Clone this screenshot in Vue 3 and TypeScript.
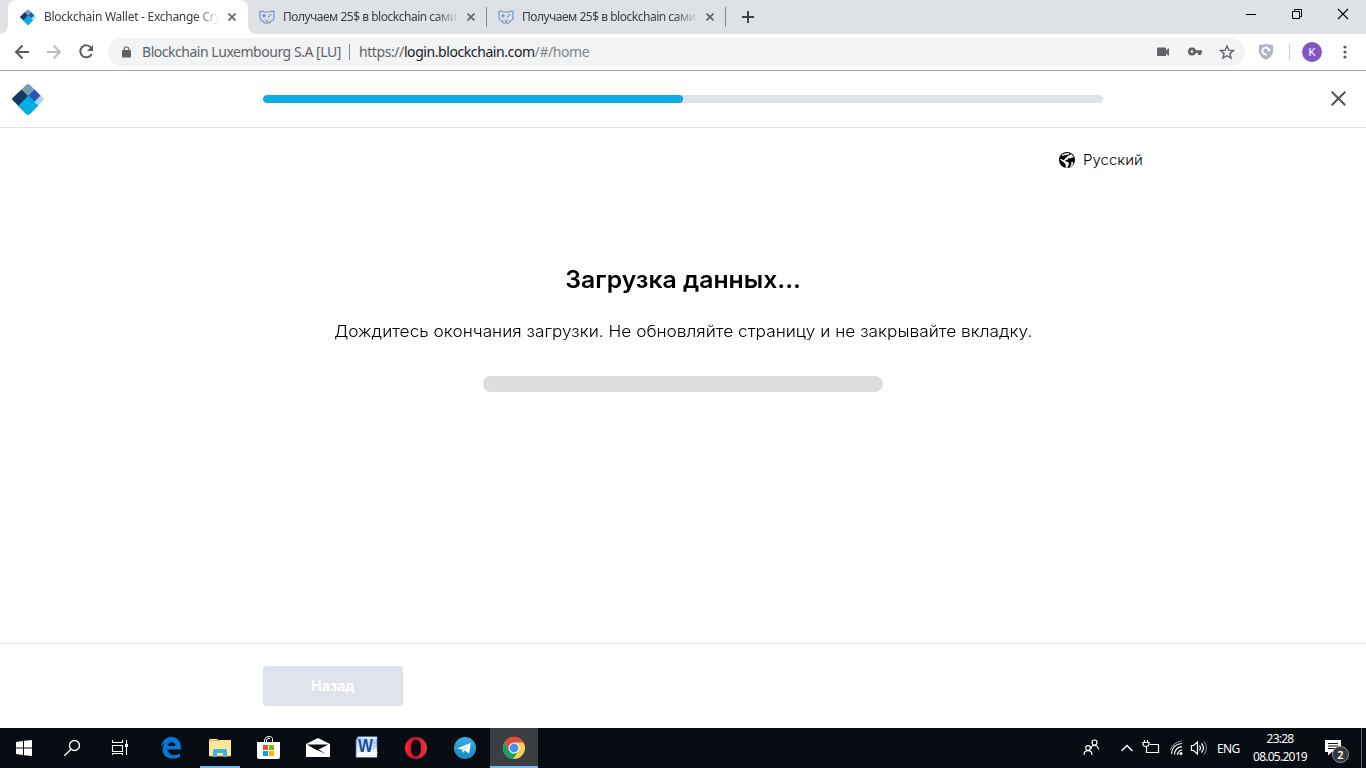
<script setup lang="ts">
interface Tab {
  id: number
  title: string
  active: boolean
}

const tabs: Tab[] = [
  { id: 1, title: 'Blockchain Wallet - Exchange Cry', active: true },
  { id: 2, title: 'Получаем 25$ в blockchain сами', active: false },
  { id: 3, title: 'Получаем 25$ в blockchain сами', active: false },
]

const progress = 50
</script>

<template>
  <div class="screen">
    <div class="tabstrip">
      <div v-for="tab in tabs" :key="tab.id" class="tab" :class="{ active: tab.active }">
        <svg v-if="tab.active" class="favicon" width="16" height="16" viewBox="0 0 32 32">
          <path d="M9 7 14 2Q16 0 18 2L23 7 16 14Z" fill="#799eb2" />
          <path d="M16 12.500 26.500 22.500 18 31Q16 33 14 31L5.500 22.500Z" fill="#00aee6" />
          <path d="M28 12 31.200 15Q32.300 16 31.200 17.500L26.300 22.500 22 18.500Z" fill="#afd3e6" />
          <path d="M9.500 6.500 16 13 6.300 22.700 1 17.500Q-1 16 1 14.500Z" fill="#123962" />
          <path d="M22.500 6.500 28.500 12.500 22.500 18.800 16.300 12.800Z" fill="#2754ba" />
        </svg>
        <svg v-else class="favicon" width="16" height="16" viewBox="0 0 16 16" fill="none" stroke="#7094c4">
          <path d="M1 2.300 3.500 2 5 3H11L12.500 2 15 2.300V9Q14.700 11.500 12 12.300L10.500 14H5.500L4 12.300Q1.300 11.500 1 9Z" stroke-width="1.200" />
          <path d="M5 5V8.500M3.300 6.700H6.700M8 11V14" stroke-width="1.500" />
          <circle cx="11.500" cy="5.800" r=".9" fill="#7094c4" stroke="none" />
          <circle cx="9.900" cy="7.500" r=".9" fill="#7094c4" stroke="none" />
          <path d="M5.500 11H6.500M9.500 11H10.500" />
        </svg>
        <span class="tab-title">{{ tab.title }}</span>
        <svg class="tab-close" width="8" height="8" viewBox="0 0 8 8"><path d="M.5.500 7.500 7.500M7.500.500.500 7.500" stroke="#5f6368" stroke-width="1.600" /></svg>
      </div>
      <svg class="new-tab" width="12" height="12" viewBox="0 0 12 12"><path d="M6 0V12M0 6H12" stroke="#3c4043" stroke-width="2" /></svg>
      <div class="window-controls">
        <svg width="46" height="28" viewBox="0 0 46 28"><path d="M18 14.500H28" stroke="#000" /></svg>
        <svg width="46" height="28" viewBox="0 0 46 28" fill="none" stroke="#000"><path d="M18.500 11.500H25.500V18.500H18.500ZM20.500 11V9.500H27.500V16.500H26" /></svg>
        <svg width="46" height="28" viewBox="0 0 46 28"><path d="M18 9 28 19M28 9 18 19" stroke="#000" stroke-width="1.100" /></svg>
      </div>
    </div>

    <div class="toolbar">
      <svg class="nav" width="108" height="36" viewBox="0 0 108 36" fill="none" stroke-width="2">
        <path d="M29 18H16M22.500 11.500 16 18 22.500 24.500" stroke="#5a5e63" />
        <path d="M47 18H60M53.500 11.500 60 18 53.500 24.500" stroke="#babcbe" />
        <path d="M91.300 14A6 6 0 1 0 91.700 20" stroke="#5a5e63" />
        <path d="M93 11V17H87Z" fill="#5a5e63" />
      </svg>
      <div class="omnibox">
        <svg class="lock" width="9" height="12" viewBox="0 0 9 12">
          <rect x="0" y="4" width="9" height="7.500" rx="1" fill="#5f6368" />
          <path d="M2.200 5V3Q2.200 1 4.500 1T6.800 3V5" fill="none" stroke="#5f6368" stroke-width="1.200" />
        </svg>
        <span class="issuer">Blockchain Luxembourg S.A [LU]</span>
        <i class="origin-rule"></i>
        <span class="url"><span class="scheme">https://</span>login.blockchain.com<span class="path">/#/home</span></span>
        <svg class="omni-icons" width="95" height="28" viewBox="0 0 95 28">
          <path d="M8 9.500H15.500Q16 9.500 16 10V12.500L19 10V18L16 15.500V17.500Q16 18 15.500 18H8Q7 18 7 17V10.500Q7 9.500 8 9.500Z" fill="#5f6368" />
          <path d="M42 9.500A4 4 0 1 1 42 17.500 4 4 0 1 1 42 9.500ZM42 12.200A1.300 1.300 0 1 0 42 14.800 1.300 1.300 0 1 0 42 12.200Z" fill="#5f6368" fill-rule="evenodd" />
          <path d="M45 12.300H52V15H51V17H48V15H45Z" fill="#5f6368" />
          <path d="M77 8 78.800 12.200 83.400 12.600 79.900 15.600 81 20.100 77 17.700 73 20.100 74.100 15.600 70.600 12.600 75.200 12.200Z" fill="none" stroke="#5f6368" stroke-width="1.400" />
        </svg>
      </div>
      <svg class="shield" width="14" height="16" viewBox="0 0 14 16">
        <path d="M0 1 7 0 14 1V8Q13 13 7 16 1 13 0 8Z" fill="#adb4c2" />
        <path d="M10.300 6.500A3.500 3.500 0 1 0 7.500 10.500" fill="none" stroke="#fff" stroke-width="2" />
        <path d="M8 5.500H12L10 8Z" fill="#fff" />
      </svg>
      <i class="toolbar-rule"></i>
      <span class="avatar">K</span>
      <svg class="menu" width="4" height="14" viewBox="0 0 4 14" fill="#5a5e63"><circle cx="2" cy="2" r="1.600" /><circle cx="2" cy="7" r="1.600" /><circle cx="2" cy="12" r="1.600" /></svg>
    </div>

    <header class="wallet-header">
      <svg class="logo" width="32" height="32" viewBox="0 0 32 32">
        <path d="M9 7 14 2Q16 0 18 2L23 7 16 14Z" fill="#799eb2" />
        <path d="M16 12.500 26.500 22.500 18 31Q16 33 14 31L5.500 22.500Z" fill="#00aee6" />
        <path d="M28 12 31.200 15Q32.300 16 31.200 17.500L26.300 22.500 22 18.500Z" fill="#afd3e6" />
        <path d="M9.500 6.500 16 13 6.300 22.700 1 17.500Q-1 16 1 14.500Z" fill="#123962" />
        <path d="M22.500 6.500 28.500 12.500 22.500 18.800 16.300 12.800Z" fill="#2754ba" />
      </svg>
      <div class="progress"><div class="progress-fill" :style="{ width: progress + '%' }"></div></div>
      <svg class="dismiss" width="15" height="15" viewBox="0 0 15 15"><path d="M.7.700 14.300 14.300M14.300.700.700 14.300" stroke="#555" stroke-width="2" /></svg>
    </header>

    <main class="content">
      <div class="language">
        <svg width="16" height="16" viewBox="0 0 16 16">
          <circle cx="8" cy="8" r="8" fill="#000" />
          <path d="M2.800 3.300Q4.500 1.500 6.500 1.200L10.500 1.300 9.500 3 8 2.500 6.500 3.500 5 3.300 3.500 4.500Z" fill="#fff" />
          <path d="M9.500 3.800 12.500 2.300 14.800 5.200 12.500 5.400 11.500 6.500 9.500 6 8.500 7.700 6 8.300 7 9.500 9.300 10.200 10 12 8.300 15.800H6.500L6.800 13 5.500 11 3.500 9.500 1 7.500 2 6.700 4.500 8.200 6 6.700 7.500 5Z" fill="#fff" />
          <path d="M14.500 9.500 12 10.500 12.500 12.300 10.500 15.300 13.500 13.500Z" fill="#fff" />
          <path d="M2 7 5 7.300 7 5.500 5.500 3.500 2.500 4.500ZM10.500 8 12.500 7 15.500 7.500 14.500 10.500 12.500 10Z" fill="#000" />
        </svg>
        <span class="language-name">Русский</span>
      </div>
      <h1><span>Загрузка данных...</span></h1>
      <p><span>Дождитесь окончания загрузки. Не обновляйте страницу и не закрывайте вкладку.</span></p>
      <div class="loading-bar"></div>
    </main>

    <footer class="wallet-footer"><button type="button" disabled>Назад</button></footer>

    <div class="taskbar">
      <div class="system-buttons">
        <svg width="48" height="40" viewBox="0 0 48 40" fill="#fff"><path d="M16 14 23 13V19.500H16ZM24 12.800 32 12V19.500H24ZM16 20.500H23V27L16 26ZM24 20.500H32V28L24 27.200Z" /></svg>
        <svg width="48" height="40" viewBox="0 0 48 40" fill="none" stroke="#fff" stroke-width="1.300"><circle cx="26.500" cy="17.500" r="5" /><path d="M23 21.300 16.300 27.700" /></svg>
        <svg width="48" height="40" viewBox="0 0 48 40" fill="none" stroke="#fff" stroke-width="1.100"><path d="M16.500 12V14.500H26.500V12M16.500 17.500H26.500V23.500H16.500ZM16.500 27V25.500H26.500V27M30.500 12V16M30.500 19V27" /><path d="M29 16H32V19H29Z" fill="#fff" stroke="none" /></svg>
      </div>
      <div class="apps">
        <div class="app">
          <svg width="48" height="40" viewBox="0 0 48 40"><path d="M14 19.500C15 12 19 9 25 9 31 9 34.200 14 34 21.500H20.500C20.500 25 24 27 27.500 27 30 27 32 26 33 25.400V29C25 32.500 16 30 15.500 22 15.300 18.500 17 16 19 14.500 16.500 15.500 15 17.500 14 19.500ZM20.600 18H28.500C28.700 13 21.500 12.800 20.600 18Z" fill="#0078d7" fill-rule="evenodd" /></svg>
        </div>
        <div class="app running">
          <svg width="48" height="40" viewBox="0 0 48 40"><path d="M13 11H22L23.500 13H13Z" fill="#e9b43c" /><path d="M15 11H20V12H15Z" fill="#fff" /><path d="M13 13H22L24 12H35V28H13Z" fill="#ffe694" /><path d="M14 28H34" stroke="#e8b947" /><path d="M18 21H30L31 22V29H27V25H21V29H17V22Z" fill="#39b1e4" /></svg>
        </div>
        <div class="app">
          <svg width="48" height="40" viewBox="0 0 48 40"><path d="M12 14H35V29Q35 31 33 31H14Q12 31 12 29Z" fill="#fff" /><path d="M19.500 14V12Q20 8.500 24 8.500T27.500 12V14M21.500 14V12Q22 10 25 10.500" fill="none" stroke="#fff" /><path d="M18 17H23V22H18Z" fill="#f25022" /><path d="M24 17H29V22H24Z" fill="#7fba00" /><path d="M18 23H23V28H18Z" fill="#00a4ef" /><path d="M24 23H29V28H24Z" fill="#ffb900" /></svg>
        </div>
        <div class="app">
          <svg width="48" height="40" viewBox="0 0 48 40"><path d="M12 16 24 10 36 16V29H12Z" fill="#fff" /><path d="M13 16.500H34.500L24.500 21.500 32 26 21.500 21.500Z" fill="#080c12" /></svg>
        </div>
        <div class="app">
          <svg width="48" height="40" viewBox="0 0 48 40">
            <defs><linearGradient id="wordpage" x1="0" x2="0" y1="0" y2="1"><stop stop-color="#b9d3f2" /><stop offset="1" stop-color="#f6faff" /></linearGradient></defs>
            <path d="M13 12 15 8.500H34V29.500H13Z" fill="url(#wordpage)" stroke="#3769ae" stroke-width=".8" /><path d="M15 9H34V11L28 12Z" fill="#dfebfa" /><path d="M30 15H33M30 18H33M29 21H32" stroke="#8aaedb" /><path d="M14 26 34 20V29H14Z" fill="#fff" opacity=".7" /><path d="M30 22 35 25 31 27Z" fill="#edf4ff" /><text x="15" y="24" textLength="15" lengthAdjust="spacingAndGlyphs" class="word-letter">W</text>
          </svg>
        </div>
        <div class="app">
          <svg width="48" height="40" viewBox="0 0 48 40">
            <defs><linearGradient id="operaring" x1="0" y1="0" x2="1" y2="0"><stop stop-color="#ff2439" /><stop offset=".45" stop-color="#cc1020" /><stop offset="1" stop-color="#e63a43" /></linearGradient></defs>
            <path d="M24 9A11 11 0 1 1 24 31 11 11 0 1 1 24 9ZM24 11.500C17.300 11.500 17.300 28.500 24 28.500S30.700 11.500 24 11.500Z" fill="url(#operaring)" fill-rule="evenodd" />
          </svg>
        </div>
        <div class="app">
          <svg width="48" height="40" viewBox="0 0 48 40">
            <defs><linearGradient id="telegramdisc" x1="0" x2="0" y1="0" y2="1"><stop stop-color="#36aee3" /><stop offset="1" stop-color="#168bc3" /></linearGradient></defs>
            <circle cx="24" cy="20" r="11" fill="url(#telegramdisc)" /><path d="M16 20.500 30 14.800 28 25.500 24 22.500 22 24.800 21 21.500Z" fill="#fff" /><path d="M21 21.500 28 16.500 22.500 22.300 22 24.800Z" fill="#bddaeb" />
          </svg>
        </div>
        <div class="app running selected">
          <svg width="48" height="40" viewBox="0 0 48 40">
            <circle cx="24" cy="20" r="11" fill="#fbd04b" /><path d="M14.400 14.500A11 11 0 0 1 33.600 14.500H24L19.300 22.700Z" fill="#e24a3b" /><path d="M14.400 14.500A11 11 0 0 0 23 31L28.700 22.700 24 25.500 19.200 22.700Z" fill="#16a066" /><circle cx="24" cy="20" r="5.500" fill="#f5f5f5" /><circle cx="24" cy="20" r="4.400" fill="#4d8bf5" />
          </svg>
        </div>
      </div>
      <div class="tray">
        <svg width="137" height="40" viewBox="0 0 137 40" fill="none" stroke="#fff" stroke-width="1.200">
          <circle cx="14.500" cy="14.500" r="2.500" /><path d="M11 21Q11 17.500 14.500 17.500T18.500 21.500" /><circle cx="8" cy="20" r="2.300" /><path d="M4 27Q4 22.700 8 22.700T12 27" />
          <path d="M41.500 23 47 17.500 52.500 23" stroke-width="1.400" />
          <path d="M70 16.500H78.500V24.500H66.500V19M64.500 14.500V12M67.500 14.500V12M63 14.500H69V16.500Q68.500 18.500 66 18.500T63 16.500ZM66.500 18V24.500" />
          <path d="M91.500 26Q92 16 102 15.500M94.500 26.500Q95 19.500 102 18.700M97.500 27Q98 22.500 102 22" /><path d="M90.500 22Q93 14 102 13" stroke="#838a90" /><circle cx="101" cy="25.500" r="1.500" fill="#fff" stroke="none" />
          <path d="M111.500 17.500H113.500L117.500 14V26L113.500 22.500H111.500ZM119.500 17.500Q121.500 20 119.500 22.500M121.500 15.500Q125.500 20 121.500 24.500" /><path d="M124 13.500Q129 20 124 26.500" stroke="#777d83" />
        </svg>
        <span class="keyboard">ENG</span>
        <div class="clock"><span>23:28</span><span class="date">08.05.2019</span></div>
        <div class="notifications">
          <svg width="16" height="16" viewBox="0 0 16 16"><path d="M0 0H16V12H7L3 15.500V12H0Z" fill="#fff" /><path d="M3 3.500H13M3 6H13M3 8.500H10" stroke="#111" /></svg>
          <span class="badge">2</span>
        </div>
        <i class="peek"></i>
      </div>
    </div>
  </div>
</template>

<style>
html, body { margin: 0; overflow: hidden; }
</style>

<style scoped>
.screen { width: 1366px; height: 768px; display: flex; flex-direction: column; overflow: hidden; background: #fff; font-family: "Noto Sans", "Open Sans", sans-serif; color: #000; }
.screen * { box-sizing: border-box; }
svg { display: block; flex: none; }
.tabstrip { height: 34px; display: flex; flex: none; background: #dee1e6; padding-left: 8px; }
.tab { width: 239px; height: 34px; display: flex; align-items: center; padding: 0 11px; position: relative; color: #3c4043; font-size: 12px; }
.tab.active { width: 240px; background: #fff; border-radius: 8px 8px 0 0; padding-left: 12px; }
.tab.active::before, .tab.active::after { content: ""; position: absolute; bottom: 0; width: 8px; height: 8px; }
.tab.active::before { left: -8px; background: radial-gradient(circle at 0 0, #dee1e6 7.500px, #fff 8px); }
.tab.active::after { right: -8px; background: radial-gradient(circle at 100% 0, #dee1e6 7.500px, #fff 8px); }
.tab:not(.active)::after { content: ""; position: absolute; right: 0; top: 7px; height: 20px; width: 1px; background: #85898d; }
.tab-title { width: 175px; height: 20px; line-height: 20px; margin: 0 9px 0 8px; white-space: nowrap; letter-spacing: -.48px; mask-image: linear-gradient(90deg, #000 152px, transparent 176px); flex: none; }
.tab.active .tab-title { letter-spacing: -.27px; }
.new-tab { margin: 11px 0 0 16px; }
.window-controls { display: flex; margin-left: auto; }
.toolbar { height: 37px; display: flex; align-items: center; flex: none; border-bottom: 1px solid #ababab; }
.omnibox { width: 1137px; height: 28px; border-radius: 14px; background: #f1f3f4; display: flex; align-items: center; padding-left: 14px; font-size: 14px; line-height: 20px; color: #5f6368; }
.issuer { margin-left: 11px; width: 199px; white-space: nowrap; letter-spacing: -.47px; }
.origin-rule { width: 1px; height: 16px; background: #85898d; margin: 0 9px 0 8px; }
.url { color: #202124; white-space: nowrap; letter-spacing: -.42px; }
.scheme { color: #5f6368; }
.path { color: #80868b; }
.omni-icons { margin-left: auto; }
.shield { margin-left: 14px; }
.toolbar-rule { width: 1px; height: 16px; background: #c9cbcd; margin: 0 12px 0 16px; }
.toolbar .toolbar-rule { margin-left: 30px; }
.toolbar .shield + .toolbar-rule { margin-left: 16px; }
.avatar { width: 20px; height: 20px; flex: none; border-radius: 50%; background: #7e57c2; color: #fff; display: flex; align-items: center; justify-content: center; font: 11px Roboto, sans-serif; }
.menu { margin-left: 21px; }
.wallet-header { height: 57px; flex: none; display: flex; align-items: center; padding: 0 20px 1px 12px; border-bottom: 1px solid #e5e5e5; }
.progress { margin-left: 219px; width: 840px; height: 8px; background: #dfe3eb; border-radius: 4px; overflow: hidden; }
.progress-fill { height: 8px; border-radius: 4px; background: #10ade4; }
.dismiss { margin-left: auto; }
.content { height: 515px; flex: none; display: flex; flex-direction: column; align-items: center; font-family: Inter, "Open Sans", sans-serif; padding-top: 20px; }
.language { width: 84px; height: 24px; align-self: flex-start; margin-left: 1059px; display: flex; align-items: center; gap: 8px; font-size: 14px; font-weight: 300; white-space: nowrap; }
.language-name { display: inline-block; transform: translateY(-1px) scaleX(1.075); transform-origin: left; }
h1 { margin: 92px 0 0; height: 32px; line-height: 32px; font-size: 24px; font-weight: 600; white-space: nowrap; }
h1 span { display: inline-block; transform: scaleX(1.032); }
p { margin: 23px 0 1px; height: 24px; line-height: 24px; font-size: 16px; font-weight: 300; white-space: nowrap; }
p span { display: inline-block; transform: scaleX(1.08); }
.loading-bar { width: 400px; height: 16px; border-radius: 8px; background: #ddd; margin-top: 32px; }
.wallet-footer { height: 85px; flex: none; border-top: 1px solid #e5e5e5; padding: 22px 0 0 263px; }
.wallet-footer button { display: block; width: 140px; height: 40px; padding: 0 0 2px; border: 0; border-radius: 3px; background: #dfe3eb; color: #fff; font: 700 14px Inter, sans-serif; }
.taskbar { height: 40px; flex: none; display: flex; background: #070b12; color: #fff; }
.system-buttons { display: flex; margin-right: 3px; }
.apps { display: flex; gap: 1px; }
.app { width: 48px; height: 40px; position: relative; }
.app.selected { background: #3a3e42; }
.app.running::after { content: ""; position: absolute; bottom: 0; left: 4px; right: 4px; height: 2px; background: #76b9ed; }
.app.selected::after { left: 0; right: 0; }
.word-letter { font: bold 18px "Liberation Sans", sans-serif; fill: #174fa5; }
.tray { margin-left: auto; display: flex; align-items: center; height: 40px; font-size: 12px; }
.keyboard { width: 23px; letter-spacing: -.6px; white-space: nowrap; }
.clock { width: 56px; margin-left: 12px; margin-right: 1px; display: flex; flex-direction: column; align-items: center; line-height: 18px; letter-spacing: -.75px; white-space: nowrap; }
.notifications { width: 24px; height: 28px; position: relative; margin-left: 16px; padding-top: 6px; }
.badge { position: absolute; left: 7px; top: 12px; width: 17px; height: 17px; border: 1px solid #8b8e92; border-radius: 50%; background: #34383d; display: flex; align-items: center; justify-content: center; font-size: 11px; line-height: 1; font-weight: 600; }
.peek { width: 1px; height: 40px; background: #60656a; margin: 0 4px 0 12px; }
</style>
